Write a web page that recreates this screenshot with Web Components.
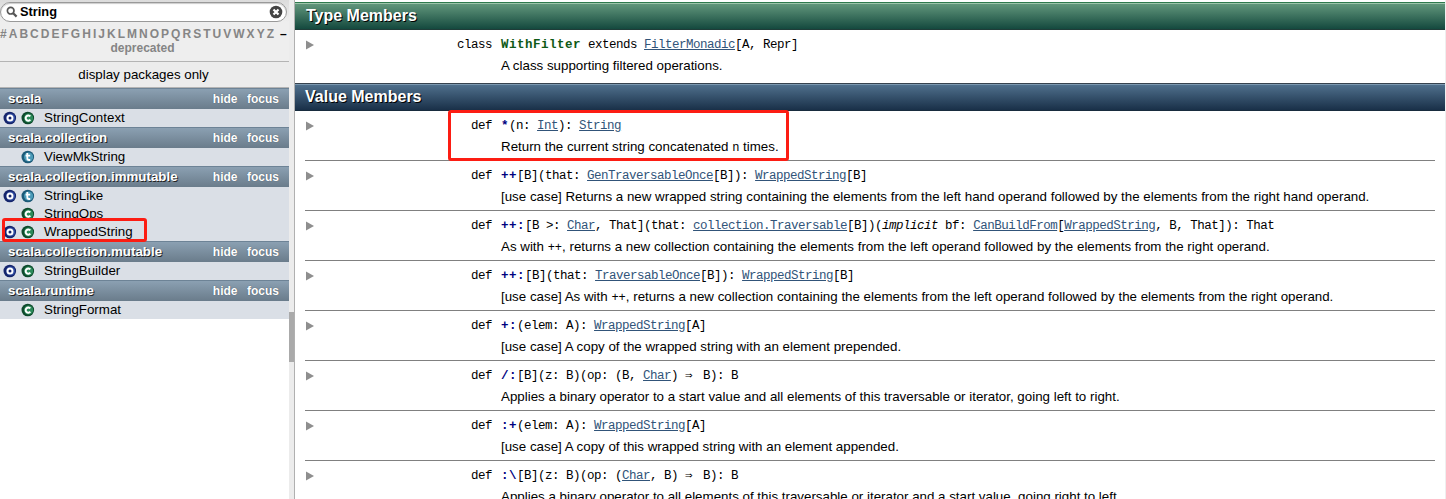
<!DOCTYPE html>
<html lang="en"><head><meta charset="utf-8"><title>WrappedString</title>
<style>html,body{margin:0;height:499px;overflow:hidden;background:#fff}</style></head>
<body><doc-page></doc-page>
<script>
const define=(name,css,html)=>customElements.define(name,class extends HTMLElement{
  constructor(){super();this.attachShadow({mode:'open'});}
  connectedCallback(){this.shadowRoot.innerHTML='<style>'+css+'</style>'+(typeof html==='function'?html(this):html);}
});
const a=s=>'<a>'+s+'</a>', b=s=>'<b>'+s+'</b>';

define('entity-icon',`:host{display:block;width:14px;height:14px}svg{display:block}`,e=>{
  const k=e.getAttribute('kind');
  const c={o:['#14246b','#2d4aa0'],c:['#0e4a2c','#2b8a5a'],t:['#1c5a78','#4a9ab8']}[k];
  const mark={o:'<circle cx="7" cy="7" r="2.5" fill="#16246c" stroke="#fff" stroke-width="2"/>',
   c:'<path d="M9.3 5.4A2.6 2.6 0 1 0 9.3 8.7" fill="none" stroke="#fff" stroke-width="2"/>',
   t:'<path d="M6.3 3V8.3Q6.3 10 8 10H9.2M4.6 5.6H9.2" fill="none" stroke="#fff" stroke-width="1.8"/>'}[k];
  return `<svg width="14" height="14" viewBox="0 0 14 14"><circle cx="6.8" cy="7" r="6.3" fill="${c[0]}"/><circle cx="7.6" cy="7" r="4.6" fill="${c[1]}"/>${mark}</svg>`;});

define('search-box',`:host{display:flex;align-items:center;box-sizing:border-box;width:287px;height:20px;margin-top:2px;border:1px solid #999;border-radius:10px;background:#fff;padding:0 3px 0 5px;box-shadow:inset 0 1px 1px #ccc}
span{flex:1;padding-left:2px;font-weight:bold;font-size:12.8px;line-height:18px}svg{display:block}`,
`<svg width="12" height="12" viewBox="0 0 12 12"><circle cx="4.7" cy="4.7" r="3.3" fill="none" stroke="#555" stroke-width="1.7"/><path d="M7.2 7.2L10.6 10.6" stroke="#555" stroke-width="2.2"/></svg><span><slot></slot></span>
<svg width="14" height="14" viewBox="0 0 14 14"><circle cx="7" cy="7" r="6.3" fill="#444"/><path d="M4.5 4.5L9.5 9.5M9.5 4.5L4.5 9.5" stroke="#fff" stroke-width="2.2"/></svg>`);

define('letter-index',`:host{display:block;height:39px;color:#858585;font-weight:bold;font-size:12px;text-align:center;border-bottom:1px solid #b4b4b4;white-space:nowrap}
.l{display:flex;width:287px;height:14px;line-height:14px;padding-top:5px}.r{display:flex;justify-content:space-between;width:274px}i{font-style:normal;color:#000;margin-left:6px}.d{line-height:15px;padding-right:4px}`,
`<div class="l"><div class="r">${[...'#ABCDEFGHIJKLMNOPQRSTUVWXYZ'].map(c=>'<span>'+c+'</span>').join('')}</div><i>–</i></div><div class="d">deprecated</div>`);

define('package-header',`:host{display:flex;box-sizing:border-box;height:21px;border-top:1px solid #6d8396;background:linear-gradient(#8ba0b2,#6a7c8b);color:#fff;font-weight:bold;font-size:12px;line-height:20px;padding:0 10px 0 8px;text-shadow:#3c4a56 0 0 1px}
.n{flex:1;font-size:13.33px;text-shadow:#222 1px 1px 0}.f{margin-left:9.5px}`,`<span class="n"><slot></slot></span><span>hide</span><span class="f">focus</span>`);

define('entity-row',`:host{display:flex;align-items:center;height:18px;background:#dadfe6;font-size:13.33px;line-height:18px}
div{width:18px;height:14px;flex:none}div:first-of-type{margin-left:3px}span{margin-left:5px}`,
e=>`<div>${e.hasAttribute('companion')?'<entity-icon kind="o"></entity-icon>':''}</div><div><entity-icon kind="${e.getAttribute('kind')}"></entity-icon></div><span><slot></slot></span>`);

define('side-panel',`:host{display:flex;position:relative;width:295px;height:499px;flex:none}
.c{width:289px;background:#fff}.top{height:62px;background:linear-gradient(#dcdcdc,#eee 22px);}
.p{height:26px;line-height:26px;text-align:center;font-size:13.33px;background:#ececec;border-bottom:1px solid #b4b4b4;box-sizing:border-box;padding-right:2px}
.s{width:5px;background:#ececec;border-right:1px solid #b0b0b0}.thumb{margin-top:312px;height:50px;background:#aaa}
.mark{position:absolute;left:2px;top:218px;width:139px;height:18px;border:3px solid #fc1d13;border-radius:3px}`,
`<div class="c"><div class="top"><div style="height:22px;display:flex"><search-box>String</search-box></div><letter-index></letter-index></div><div class="p">display packages only</div>
<package-header>scala</package-header><entity-row companion kind="c">StringContext</entity-row>
<package-header>scala.collection</package-header><entity-row kind="t">ViewMkString</entity-row>
<package-header>scala.collection.immutable</package-header><entity-row companion kind="t">StringLike</entity-row><entity-row kind="c">StringOps</entity-row><entity-row companion kind="c">WrappedString</entity-row>
<package-header>scala.collection.mutable</package-header><entity-row companion kind="c">StringBuilder</entity-row>
<package-header>scala.runtime</package-header><entity-row kind="c">StringFormat</entity-row></div><div class="s"><div class="thumb"></div></div><div class="mark"></div>`);

define('member-header',`:host{display:block;box-sizing:border-box;height:28px;margin-right:1px;padding-left:10px;color:#fff;font-weight:bold;font-size:16px;line-height:25px;text-shadow:#000 1px 1px 0;border-top:1px solid #37434f;border-bottom:1px solid #182c3e;background:linear-gradient(#7b98b0 1px,#4f6f8c 1px,#193048)}
:host([type]){padding-left:11px;border-top-color:#2f7a4e;border-bottom-color:#1f3c38;background:linear-gradient(#9dc4ab 1px,#61967b 1px,#14493e)}`,`<slot></slot>`);

define('member-row',`:host{display:flex;box-sizing:border-box;height:50px;margin:0 11px 0 10px;border-bottom:1px solid #808080;white-space:pre}
:host([last]){border:0;height:53px}svg{margin:10px 0 0 1px;flex:none}
.k{width:178px}.k{text-align:right}.b{padding-left:9px}
.sig,.k{font-family:"Liberation Mono",monospace;font-size:12.5px;letter-spacing:-.501px;height:16px;line-height:16px;padding-top:7px}
.sig b{letter-spacing:.499px;color:#00007f}.sig b.g{color:#0f5a16}.sig a{color:#315479;text-decoration:underline}.sig u{display:inline-block;width:11px;text-decoration:none}
.d{font-size:13.33px;line-height:18px;padding-top:4px}.d code{display:inline-block;font-family:"Liberation Mono",monospace;font-size:12px;line-height:10px}`,
e=>`<svg width="8" height="10" viewBox="0 0 8 10"><path d="M0 .5L8 5L0 9.5Z" fill="#8e8e8e"/></svg><div class="k">${e.getAttribute('kind')||'def'}</div><div class="b"><div class="sig">${e.sig}</div><div class="d">${e.desc}</div></div>`);

define('member-list',`:host{display:block;flex:1;min-width:0;height:497px;padding-top:2px;overflow:hidden;position:relative}
.mark{position:absolute;left:153px;top:110px;width:335px;height:45px;border:3px solid #fc1d13;border-radius:3px}.edge{position:absolute;right:0;top:0;width:1px;height:499px;background:#efefef}`,'<member-header type>Type Members</member-header><div id="t"></div><member-header>Value Members</member-header><div id="v"></div><div class="edge"></div><div class="mark"></div>');

const W=a('WrappedString'), AR='<u>⇒</u>';
const rows=[
 [b('*')+'(n: '+a('Int')+'): '+a('String'),'Return the current string concatenated <code>n</code> times.'],
 [b('++')+'[B](that: '+a('GenTraversableOnce')+'[B]): '+W+'[B]','[use case] Returns a new wrapped string containing the elements from the left hand operand followed by the elements from the right hand operand.'],
 [b('++:')+'[B &gt;: '+a('Char')+', That](that: '+a('collection.Traversable')+'[B])(<i>implicit</i> bf: '+a('CanBuildFrom')+'['+W+', B, That]): That','As with <code>++</code>, returns a new collection containing the elements from the left operand followed by the elements from the right operand.'],
 [b('++:')+'[B](that: '+a('TraversableOnce')+'[B]): '+W+'[B]','[use case] As with <code>++</code>, returns a new collection containing the elements from the left operand followed by the elements from the right operand.'],
 [b('+:')+'(elem: A): '+W+'[A]','[use case] A copy of the wrapped string with an element prepended.'],
 [b('/:')+'[B](z: B)(op: (B, '+a('Char')+') '+AR+' B): B','Applies a binary operator to a start value and all elements of this traversable or iterator, going left to right.'],
 [b(':+')+'(elem: A): '+W+'[A]','[use case] A copy of this wrapped string with an element appended.'],
 [b(':\\')+'[B](z: B)(op: ('+a('Char')+', B) '+AR+' B): B','Applies a binary operator to all elements of this traversable or iterator and a start value, going right to left.']];
define('doc-page',`:host{display:flex;width:1446px;height:499px;font-family:"Liberation Sans",Arial,sans-serif;color:#000}`,`<side-panel></side-panel><member-list></member-list>`);
const list=document.querySelector('doc-page').shadowRoot.querySelector('member-list').shadowRoot;
const add=(id,[sig,desc],kind)=>{const r=document.createElement('member-row');r.sig=sig;r.desc=desc;if(kind){r.setAttribute('kind',kind);r.setAttribute('last','')}list.getElementById(id).append(r)};
add('t',['<b class="g">WithFilter</b> extends '+a('FilterMonadic')+'[A, Repr]','A class supporting filtered operations.'],'class');
rows.forEach(r=>add('v',r));
</script></body></html>
